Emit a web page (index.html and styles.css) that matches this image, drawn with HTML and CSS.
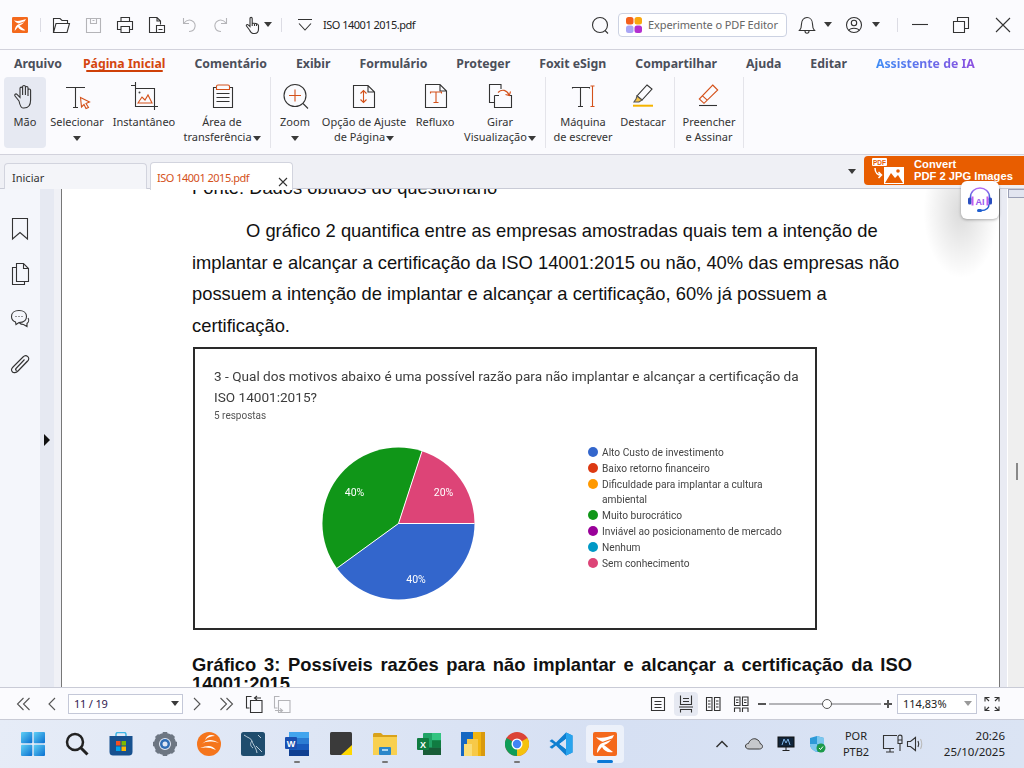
FILE: index.html
```html
<!DOCTYPE html>
<html lang="pt-BR">
<head>
<meta charset="utf-8">
<title>ISO 14001 2015.pdf</title>
<link rel="stylesheet" href="styles.css">
</head>
<body>
<svg class="defs" width="0" height="0" aria-hidden="true">
  <defs>
    <linearGradient id="winGrad" x1="0" y1="0" x2="1" y2="1"><stop offset="0" stop-color="#5fd0f5"/><stop offset="1" stop-color="#0a6fd0"/></linearGradient>
    <linearGradient id="aiGrad" x1="0" y1="0" x2="0" y2="1"><stop offset="0" stop-color="#b46cf5"/><stop offset="1" stop-color="#1f5fd0"/></linearGradient>
    <symbol id="foxit" viewBox="0 0 24 24">
      <rect width="24" height="24" rx="2" fill="#f4691c"/>
      <path d="M3 5 C9 7 14 5 21 3 C19 8 15 12 11 13 L20 20 C15 21 11 19 9 15 C7 17 6 19 4 21 C4 15 7 12 10 10 C8 9 5 8 3 5 Z" fill="#fff"/>
      <path d="M8 11 L19 7" stroke="#f4691c" stroke-width="1.2" fill="none"/>
    </symbol>
  </defs>
</svg>

<header class="titlebar">
  <div class="tb tb-logo"><svg width="16" height="16"><use href="#foxit"/></svg></div>
  <span class="vsep vsep-a"></span>
  <button class="tb"><svg width="20" height="20" class="ic"><path d="M2.5 17.5 V3.5 H9 l2 2 H16.5 V8.5 M2.5 17.5 L5 8.5 H18.5 L16 17.5 Z"/></svg></button>
  <button class="tb"><svg width="20" height="20" class="ic ic-off"><path d="M3.5 3.5 H17.5 V17.5 H3.5 Z M7.5 3.5 V8.5 H13.5 V3.5 M9.5 5.5 H11.5"/></svg></button>
  <button class="tb"><svg width="20" height="20" class="ic"><path d="M6 6.5 V2.5 H14.5 V6.5 M6 14.5 H2.5 V6.5 H17.5 V14.5 H14 M6 11.5 H14.5 V17.5 H6 Z"/></svg></button>
  <button class="tb"><svg width="20" height="20" class="ic"><path d="M9 17.5 H2.5 V2.5 H10 L13.5 6 V9.5 M10 2.5 V6 H13.5 M9.5 10.5 H17.5 V17.5 H9.5 Z M11.5 14.5 H15.5"/></svg></button>
  <button class="tb"><svg width="20" height="20" class="ic ic-off"><path d="M4.5 3 V8.5 H10 M4.5 8.5 C7 5.5 10 4.5 12.5 5.5 C16 7 17 10.5 15.5 13.5 C14.5 15.5 12.5 16.5 10 16.5"/></svg></button>
  <button class="tb"><svg width="20" height="20" class="ic ic-off"><path d="M15.5 3 V8.5 H10 M15.5 8.5 C13 5.5 10 4.5 7.5 5.5 C4 7 3 10.5 4.5 13.5 C5.5 15.5 7.5 16.5 10 16.5"/></svg></button>
  <button class="tb"><svg width="20" height="20" class="ic"><path d="M6.5 15 L3.5 11 C3 10 4.3 9 5.2 9.9 L7 11.5 V3.5 C7 2 9.2 2 9.2 3.5 V8.5 C11 8 15.5 8.5 15.5 10.5 V14 C15.5 17 14 18.5 11.5 18.5 H10 C8.5 18.5 7.5 17 6.5 15 Z M9.2 8.5 V11 M11.5 8.5 V11 M13.5 9 V11"/></svg></button>
  <span class="caret caret-hand"></span>
  <span class="vsep vsep-b"></span>
  <button class="tb tb-drop"><svg width="20" height="20" class="ic"><path d="M3 4.5 H17 M4 8.5 L10 15 L16 8.5"/></svg></button>
  <span class="doc-title">ISO 14001 2015.pdf</span>
  <span class="grow"></span>
  <button class="tb tb-search"><svg width="20" height="20" class="ic"><circle cx="10" cy="10" r="7.5"/><path d="M15 15.5 L18 18.5"/></svg></button>
  <button class="try">
    <svg width="16" height="16"><rect x="0" y="0" width="7.5" height="7.5" rx="2.5" fill="#f4601c"/><rect x="8.5" y="0" width="7.5" height="7.5" rx="2.5" fill="#f9a70f"/><rect x="0" y="8.5" width="7.5" height="7.5" rx="2.5" fill="#a9a6f5"/><rect x="8.5" y="8.5" width="7.5" height="7.5" rx="2.5" fill="#b42fd0"/></svg>
    <span>Experimente o PDF Editor</span>
  </button>
  <button class="tb tb-bell"><svg width="20" height="20" class="ic"><path d="M2.5 15.5 C4.5 13.5 4.5 11.5 4.5 9 C4.5 5 7 2.5 10 2.5 C13 2.5 15.5 5 15.5 9 C15.5 11.5 15.5 13.5 17.5 15.5 Z M8 16 C8 19 12 19 12 16"/></svg></button>
  <span class="caret caret-bell"></span>
  <button class="tb tb-user"><svg width="20" height="20" class="ic"><circle cx="10" cy="10" r="7.5"/><circle cx="10" cy="8" r="2.7"/><path d="M5 15.5 C6 12.5 14 12.5 15 15.5"/></svg></button>
  <span class="caret caret-user"></span>
  <span class="vsep vsep-c"></span>
  <button class="win win-min"><svg width="20" height="20" class="ic"><path d="M2 9.5 H18"/></svg></button>
  <button class="win win-max"><svg width="20" height="20" class="ic"><path d="M2.5 6.5 H13.5 V17.5 H2.5 Z M6.5 6.5 V2.5 H17.5 V13.5 H13.5"/></svg></button>
  <button class="win win-close"><svg width="20" height="20" class="ic"><path d="M3 3 L17 17 M17 3 L3 17"/></svg></button>
</header>

<nav class="menu">
  <span>Arquivo</span>
  <span class="menu-on">Página Inicial</span>
  <span>Comentário</span>
  <span>Exibir</span>
  <span>Formulário</span>
  <span>Proteger</span>
  <span>Foxit eSign</span>
  <span>Compartilhar</span>
  <span>Ajuda</span>
  <span>Editar</span>
  <span class="menu-ai">Assistente de IA</span>
</nav>

<section class="ribbon">
  <div class="rb rb-mao on">
    <svg width="32" height="32" class="ic ic-rb"><path d="M10 19 L6 14 C5 12.7 6.8 11.2 8 12.4 L11 15.5 V6.5 C11 4.7 13.6 4.7 13.6 6.5 V13 V4.8 C13.6 3 16.4 3 16.4 4.8 V13 V5.8 C16.4 4 19 4 19 5.8 V14 V8.3 C19 6.5 21.6 6.5 21.6 8.3 V18 C21.6 23 19 26 15 26 H14 C12.5 26 11.3 25 10 19 Z"/></svg>
    <span>Mão</span>
  </div>
  <div class="rb rb-sel">
    <svg width="32" height="32" class="ic ic-rb"><path d="M5 5.5 H24 M14.5 5.5 V25.5 M12 25.5 H17"/><path class="or" d="M19.5 15.5 L28.5 20 L25 21.5 L27.5 25.5 L25 26.5 L23 22.5 L20.5 25 Z"/></svg>
    <span>Selecionar<br><i class="caret"></i></span>
  </div>
  <div class="rb rb-ins">
    <svg width="32" height="32" class="ic ic-rb"><path d="M3 3.5 L7.5 3.5 M7.5 0 V24.5 H30 M7.5 6.5 H26.5 V28"/><circle cx="11.5" cy="10.5" r="1" class="dot"/><path class="or" d="M10 21 L14 15 L17 18 L20 13 L24 21 Z"/></svg>
    <span>Instantâneo</span>
  </div>
  <div class="rb rb-are">
    <svg width="32" height="32" class="ic ic-rb"><path d="M10 5.5 H7.5 V25.5 H26.5 V5.5 H24 M10.5 11.5 H23.5 M10.5 15.5 H23.5 M10.5 19.5 H23.5"/><path class="or" d="M10.5 7.5 V4.5 C10.5 3.5 11 3 12 3 H22 C23 3 23.5 3.5 23.5 4.5 V7.5 Z"/></svg>
    <span>Área de<br>transferência<i class="caret"></i></span>
  </div>
  <span class="rsep rsep-1"></span>
  <div class="rb rb-zoo">
    <svg width="32" height="32" class="ic ic-rb"><circle cx="16" cy="13.5" r="11"/><path d="M24 21.5 L29 26.5"/><path class="or" d="M10 13.5 H22 M16 7.5 V19.5"/></svg>
    <span>Zoom<br><i class="caret"></i></span>
  </div>
  <div class="rb rb-opc">
    <svg width="32" height="32" class="ic ic-rb"><path d="M5.5 3.5 H20 L26.5 10 V25.5 H5.5 Z M20 3.5 V10 H26.5"/><path class="or" d="M15.5 8.5 V20.5 M12.5 11.5 L15.5 8.5 L18.5 11.5 M12.5 17.5 L15.5 20.5 L18.5 17.5"/></svg>
    <span>Opção de Ajuste<br>de Página<i class="caret"></i></span>
  </div>
  <div class="rb rb-ref">
    <svg width="32" height="32" class="ic ic-rb"><path d="M6.5 2.5 H21 L27.5 9 V25.5 H6.5 Z M21 2.5 V9 H27.5"/><path class="or" d="M11.5 11.5 V10 H22.5 V11.5 M17 10 V20.5 M14.5 20.5 H19.5"/></svg>
    <span>Refluxo</span>
  </div>
  <div class="rb rb-gir">
    <svg width="32" height="32" class="ic ic-rb"><path d="M10 20.5 H5.5 V2.5 H16 M16 2.5 H17 V7"/><path d="M10.5 13.5 V25.5 H27.5 V13.5 H25 M10.5 13.5 H15"/><path class="or" d="M14 10.5 C18 6.5 23 8 25 13 M21.5 12.5 L25.3 13.5 L26.5 9.5"/></svg>
    <span>Girar<br>Visualização<i class="caret"></i></span>
  </div>
  <span class="rsep rsep-2"></span>
  <div class="rb rb-maq">
    <svg width="32" height="32" class="ic ic-rb"><path d="M5.5 6.5 V5.5 H22.5 V6.5 M13.5 5.5 V24.5 M11 24.5 H16"/><path class="or" d="M25.5 4 V24.5 M23.5 4 H27.5 M23.5 24.5 H27.5"/></svg>
    <span>Máquina<br>de escrever</span>
  </div>
  <div class="rb rb-des">
    <svg width="32" height="32" class="ic ic-rb"><path d="M20 3 L25 7 L15 18 L10 14 Z"/><path class="yl" d="M10 14 L15 18 L12 20 L7 20 L9 17 Z"/><path class="yl-line" d="M6 23.7 H26"/></svg>
    <span>Destacar</span>
  </div>
  <span class="rsep rsep-3"></span>
  <div class="rb rb-pre">
    <svg width="32" height="32" class="ic ic-rb"><path d="M6 23.5 H24"/><path class="or" d="M19.7 3 L24.700 8 L11 21.300 L6.300 17 Z M9.500 13.800 L14.500 18.300"/></svg>
    <span>Preencher<br>e Assinar</span>
  </div>
  <span class="rsep rsep-4"></span>
</section>

<section class="tabs">
  <div class="tab">Iniciar</div>
  <div class="tab tab-on"><span class="tab-name">ISO 14001 2015.pdf</span><svg width="12" height="12" class="ic tab-x"><path d="M2 2 L10 10 M10 2 L2 10"/></svg></div>
  <span class="grow"></span>
  <span class="caret caret-tabs"></span>
  <div class="promo">
    <svg width="34" height="26" viewBox="0 0 34 26">
      <rect x="1" y="0" width="15" height="8" rx="1" fill="#fff"/>
      <text x="8.5" y="6.5" class="promo-pdf" text-anchor="middle">PDF</text>
      <path d="M4 10 C4 15 7 17 10 17 M7.5 14 L10.5 17 L7.5 20" stroke="#fff" stroke-width="1.5" fill="none"/>
      <path d="M13 9 H33 V26 H13 Z" fill="#fff"/>
      <path d="M14 25 L20 15 L24 20 L27 17 L32 25 Z" fill="#e85d00"/>
      <circle cx="27" cy="13" r="1.8" fill="#e85d00"/>
    </svg>
    <div class="promo-text"><span>Convert</span><span>PDF 2 JPG Images</span></div>
  </div>
</section>

<div class="ai-btn">
  <svg width="28" height="28" viewBox="0 0 28 28">
    <path d="M4.5 14 V11 C4.5 5.5 9 2 14 2 C19 2 23.5 5.5 23.5 11 V14" stroke="url(#aiGrad)" stroke-width="1.5" fill="none"/>
    <path d="M23 18 C23 22 20 24.5 15 24.5" stroke="#1f5fd0" stroke-width="1.5" fill="none"/>
    <rect x="11" y="23" width="5" height="3" rx="1.5" fill="#1f5fd0"/>
    <rect x="2" y="11.5" width="3.5" height="7" rx="1.6" fill="#2a4fc0"/>
    <rect x="22.5" y="11.5" width="3.5" height="7" rx="1.6" fill="#2a4fc0"/>
    <rect x="5.5" y="10.5" width="2" height="9" fill="#c05df0"/>
    <rect x="20.5" y="10.5" width="2" height="9" fill="#c05df0"/>
    <text x="14" y="18.5" class="ai-t" text-anchor="middle">AI</text>
  </svg>
</div>

<main class="main">
  <aside class="side">
    <div class="side-ic"><svg width="20" height="24" class="ic"><path d="M2.5 1.5 H17.5 V22 L10 15.5 L2.5 22 Z"/></svg></div>
    <div class="side-ic"><svg width="20" height="24" class="ic"><path d="M6.5 1.5 H13.5 L18.5 6.5 V19.5 H6.5 Z M13.5 1.5 V6.5 H18.5 M6.5 5.5 H2.5 V22.5 H14.5 V19.5"/></svg></div>
    <div class="side-ic"><svg width="20" height="24" class="ic"><path d="M9 3.5 C4.5 3.5 1.5 6 1.5 9.5 C1.5 12 3 14 5.5 15 L6 17.5 L9 15.5 C14 15.5 16.5 13 16.5 9.5 C16.5 6 13.5 3.5 9 3.5 Z M18 11 C19 12.5 19 15 17 16.5 L17 19.5 L13.5 17.5 C12 17.5 10.5 17 9.5 16"/><path d="M5.5 9.5 H6.5 M8.5 9.5 H9.5 M11.5 9.5 H12.5"/></svg></div>
    <div class="side-ic side-clip"><svg width="20" height="24" class="ic"><path d="M17.5 8 L8 18 C6 20 3.5 20 2.5 19 C1 17.5 1.5 15.5 3 14 L13 4 C14.5 2.5 16.5 2.5 17.8 3.7 C19 5 18.8 7 17.5 8.3 L8 18 M14.5 6.5 L6 15.5 C5 16.5 6 17.8 7 17"/></svg></div>
  </aside>
  <div class="strip"><span class="strip-arrow"></span></div>
  <div class="gutter"></div>
  <article class="page">
    <div class="page-shade"></div>
    <div class="page-in">
      <p class="source">Fonte: Dados obtidos do questionário</p>
      <p class="para">O gráfico 2 quantifica entre as empresas amostradas quais tem a intenção de implantar e alcançar a certificação da ISO 14001:2015 ou não, 40% das empresas não possuem a intenção de implantar e alcançar a certificação, 60% já possuem a certificação.</p>
      <figure class="chart">
        <div class="chart-in">
          <h2 class="chart-title">3 - Qual dos motivos abaixo é uma possível razão para não implantar e alcançar a certificação da ISO 14001:2015?</h2>
          <div class="chart-sub">5 respostas</div>
          <div class="chart-row">
            <svg class="pie" width="157" height="157" viewBox="0 0 157 157">
              <path d="M78.5 78.5 L154.5 78.5 A76 76 0 0 1 17 123.2 Z" fill="#3366cc"/>
              <path d="M78.5 78.5 L17 123.2 A76 76 0 0 1 102 6.2 Z" fill="#109618"/>
              <path d="M78.5 78.5 L102 6.2 A76 76 0 0 1 154.5 78.5 Z" fill="#dd4477"/>
              <path d="M78.5 78.5 L154.5 78.5 M78.5 78.5 L17 123.2 M78.5 78.5 L102 6.2" stroke="#fff" stroke-width="1" fill="none"/>
              <text x="34.5" y="51" class="pie-t" text-anchor="middle">40%</text>
              <text x="123.5" y="51" class="pie-t" text-anchor="middle">20%</text>
              <text x="96" y="137.500" class="pie-t" text-anchor="middle">40%</text>
            </svg>
            <ul class="legend">
              <li><i class="dot-l c1"></i>Alto Custo de investimento</li>
              <li><i class="dot-l c2"></i>Baixo retorno financeiro</li>
              <li><i class="dot-l c3"></i>Dificuldade para implantar a cultura ambiental</li>
              <li><i class="dot-l c4"></i>Muito burocrático</li>
              <li><i class="dot-l c5"></i>Inviável ao posicionamento de mercado</li>
              <li><i class="dot-l c6"></i>Nenhum</li>
              <li><i class="dot-l c7"></i>Sem conhecimento</li>
            </ul>
          </div>
        </div>
      </figure>
      <p class="caption">Gráfico 3: Possíveis razões para não implantar e alcançar a certificação da ISO 14001:2015.</p>
    </div>
  </article>
  <div class="gutter-r"></div>
  <div class="scroll">
    <span class="scroll-top"></span>
    <span class="scroll-thumb"></span>
  </div>
</main>

<footer class="navbar">
  <button class="nb"><svg width="18" height="18" class="ic ic-nav"><path d="M8.5 3 L2.500 9 L8.500 15 M14.500 3 L8.500 9 L14.500 15"/></svg></button>
  <button class="nb"><svg width="18" height="18" class="ic ic-nav"><path d="M12 3 L6 9 L12 15"/></svg></button>
  <div class="page-box"><span>11 / 19</span><i class="caret"></i></div>
  <button class="nb"><svg width="18" height="18" class="ic ic-nav"><path d="M6 3 L12 9 L6 15"/></svg></button>
  <button class="nb nb-w"><svg width="18" height="18" class="ic ic-nav"><path d="M3.500 3 L9.500 9 L3.500 15 M9.500 3 L15.500 9 L9.500 15"/></svg></button>
  <button class="nb nb-back"><svg width="18" height="18" class="ic"><path d="M6.500 1.500 H1.500 V13 H4.500 M5.500 5.500 H17 V17.500 H5.500 Z M9 3 H16 M12 1 L9.500 3 L12 5"/></svg></button>
  <button class="nb"><svg width="18" height="18" class="ic ic-off"><path d="M6.500 1.500 H1.500 V13 H4.500 M5.500 5.500 H17 V17.500 H5.500 Z M2 15.500 H9 M7 13.500 L9.500 15.500 L7 17.500"/></svg></button>
  <span class="grow"></span>
  <button class="nb"><svg width="18" height="18" class="ic"><path d="M2.500 2.500 H15.500 V15.500 H2.500 Z M5.500 6.500 H12.500 M5.500 9.500 H12.500 M5.500 12.500 H12.500"/></svg></button>
  <button class="nb nb-on"><svg width="18" height="18" class="ic"><path d="M3.500 0.500 V9.500 H14.500 V0.500 M6 3.500 H12 M6 6.500 H12 M2 12 H16 M3.500 17.500 V14.500 H14.500 V17.500"/></svg></button>
  <button class="nb nb-two"><svg width="18" height="18" class="ic"><path d="M2.500 2.500 H8 V15.500 H2.500 Z M10.500 2.500 H16 V15.500 H10.500 Z M4 6 H6.500 M4 9 H6.500 M4 12 H6.500 M12 6 H14.500 M12 9 H14.500 M12 12 H14.500"/></svg></button>
  <button class="nb"><svg width="18" height="18" class="ic"><path d="M2.500 2 H8 V10.500 H2.500 Z M10.500 2 H16 V10.500 H10.500 Z M4 5 H6.500 M4 7.500 H6.500 M12 5 H14.500 M12 7.500 H14.500 M2.500 17 V13 H8 V17 M10.500 17 V13 H16 V17"/></svg></button>
  <span class="zm zm-minus"></span>
  <div class="slider"><span class="thumb"></span></div>
  <span class="zm zm-plus"></span>
  <div class="zoom-box"><span>114,83%</span><i class="caret caret-g"></i></div>
  <button class="nb nb-full"><svg width="18" height="18" class="ic"><path d="M2 6.500 V2.500 H6.500 M2.500 2.500 L6 6 M16 6.500 V2.500 H11.500 M15.500 2.500 L12 6 M2 11.500 V15.500 H6.500 M2.500 15.500 L6 12 M16 11.500 V15.500 H11.500 M15.500 15.500 L12 12"/></svg></button>
</footer>

<footer class="taskbar">
  <div class="tk">
    <svg width="24" height="24"><rect width="11.300" height="11.300" rx="1" fill="url(#winGrad)"/><rect x="12.700" width="11.300" height="11.300" rx="1" fill="url(#winGrad)"/><rect y="12.700" width="11.300" height="11.300" rx="1" fill="url(#winGrad)"/><rect x="12.700" y="12.700" width="11.300" height="11.300" rx="1" fill="url(#winGrad)"/></svg>
  </div>
  <div class="tk">
    <svg width="24" height="24"><circle cx="10" cy="10" r="8" fill="none" stroke="#222" stroke-width="2.500"/><path d="M16 16 L22.500 22.500" stroke="#222" stroke-width="3"/></svg>
  </div>
  <div class="tk">
    <svg width="24" height="24"><path d="M7 5 V2.500 C7 1 8 0.500 9 0.500 H15 C16 0.500 17 1 17 2.500 V5" fill="none" stroke="#3db5e5" stroke-width="1.500"/><path d="M0.500 4 H23.500 V20 C23.500 22.500 22 23.500 20 23.500 H4 C2 23.500 0.500 22.500 0.500 20 Z" fill="#17518f"/><rect x="7" y="9" width="4.500" height="4.500" fill="#f25022"/><rect x="12.500" y="9" width="4.500" height="4.500" fill="#7fba00"/><rect x="7" y="14.500" width="4.500" height="4.500" fill="#00a4ef"/><rect x="12.500" y="14.500" width="4.500" height="4.500" fill="#ffb900"/></svg>
  </div>
  <div class="tk">
    <svg width="24" height="24"><circle cx="12" cy="12" r="8.500" fill="none" stroke="#6d7682" stroke-width="5"/><path d="M12 0 V4 M12 20 V24 M0 12 H4 M20 12 H24 M3.500 3.500 L6.300 6.300 M17.700 17.700 L20.500 20.500 M20.500 3.500 L17.700 6.300 M6.300 17.700 L3.500 20.500" stroke="#6d7682" stroke-width="4.500"/><circle cx="12" cy="12" r="5" fill="#2f6db5"/><circle cx="12" cy="12" r="2.500" fill="#dfe6f4"/></svg>
  </div>
  <div class="tk">
    <svg width="24" height="24"><circle cx="12" cy="12" r="12" fill="#f5751c"/><path d="M3 16 C8 15 13 15 19 18 C15 13 11 13 3 16 Z M5 12 C9 9 14 9 22 11 C15 7 10 7 5 12 Z M8 8 C11 5 14 4 18 4 C14 2 10 3 8 8 Z" fill="#fff"/></svg>
  </div>
  <div class="tk">
    <svg width="24" height="24"><rect width="24" height="24" rx="2.500" fill="#1f4d6e"/><path d="M3 3 C7 6 10 6 11 9 C12 13 15 15 16 21 M11 9 C9 11 9 14 12 16 M17 3 L20 6 M15 14 L21 20" stroke="#b9cbd8" stroke-width="1" fill="none"/></svg>
  </div>
  <div class="tk tk-run">
    <svg width="24" height="24"><rect x="4" y="0" width="20" height="6" fill="#41a5ee"/><rect x="4" y="6" width="20" height="6" fill="#2b7cd3"/><rect x="4" y="12" width="20" height="6" fill="#185abd"/><rect x="4" y="18" width="20" height="6" fill="#103f91"/><rect x="0" y="5" width="12" height="12" rx="1" fill="#1a4fb0"/><text x="6" y="15" class="tk-letter" text-anchor="middle">W</text></svg>
  </div>
  <div class="tk">
    <svg width="24" height="24"><rect x="1" y="0" width="22" height="23" rx="1.500" fill="#3a3a3a"/><path d="M12 23 L23 13 V23 Z" fill="#ffd800"/></svg>
  </div>
  <div class="tk tk-run">
    <svg width="24" height="24"><path d="M0 3 C0 1.500 0.500 1 2 1 H8 L10 3 H24 V6 H0 Z" fill="#d9a21b"/><path d="M0 5 H24 V23 H0 Z" fill="#f8d050"/><rect x="6" y="15" width="12" height="8" rx="1" fill="#2a86c9"/><rect x="9" y="17" width="6" height="2" fill="#a9d5f0"/></svg>
  </div>
  <div class="tk">
    <svg width="24" height="24"><rect x="6" y="1" width="18" height="22" rx="1" fill="#21a366"/><rect x="15" y="1" width="9" height="7.300" fill="#33c481"/><rect x="6" y="8.300" width="9" height="7.300" fill="#21a366"/><rect x="15" y="8.300" width="9" height="7.300" fill="#107c41"/><rect x="6" y="15.600" width="9" height="7.400" fill="#185c37"/><rect x="15" y="15.600" width="9" height="7.400" fill="#185c37"/><rect x="0" y="6" width="12" height="12" rx="1" fill="#107c41"/><text x="6" y="16" class="tk-letter" text-anchor="middle">X</text></svg>
  </div>
  <div class="tk">
    <svg width="24" height="24"><rect width="24" height="24" fill="#1467c2"/><rect x="12" y="0" width="12" height="24" fill="#d99a0e"/><rect x="12" y="0" width="8" height="24" fill="#f2b50f"/><rect x="6" y="7" width="11" height="17" fill="#f7c948"/><rect x="3" y="12" width="8" height="12" fill="#f9dd77"/></svg>
  </div>
  <div class="tk tk-run">
    <svg width="24" height="24"><circle cx="12" cy="12" r="12" fill="#db4437"/><path d="M12 12 L22.400 6 A12 12 0 0 1 12 24 Z" fill="#f4c20d"/><path d="M12 12 L12 24 A12 12 0 0 1 1.600 6 Z" fill="#0f9d58"/><circle cx="12" cy="12" r="5.500" fill="#fff"/><circle cx="12" cy="12" r="4.200" fill="#4285f4"/></svg>
  </div>
  <div class="tk">
    <svg width="24" height="24"><path d="M17 0.500 L23.500 3.500 V20.500 L17 23.500 L7 13.500 L3 16.800 L0.500 15 L5 12 L0.500 9 L3 7.200 L7 10.500 Z M17 7 L10.500 12 L17 17 Z" fill="#0f7fd0" fill-rule="evenodd"/><path d="M17 0.500 L23.500 3.500 V20.500 L17 23.500 Z" fill="#28a4ee"/><path d="M17 7 L10.500 12 L17 17 Z" fill="#d9e2f3"/></svg>
  </div>
  <div class="tk tk-active">
    <svg width="24" height="24"><use href="#foxit"/></svg>
    <span class="tk-bar"></span>
  </div>
  <div class="tray">
    <div class="tr"><svg width="14" height="10" class="ic ic-tr"><path d="M1.500 8 L7 2.500 L12.500 8"/></svg></div>
    <div class="tr"><svg width="18" height="14"><path d="M4 12 C1.500 12 0.500 10.500 0.500 9 C0.500 7.500 2 6.500 3.500 6.500 C4.500 3 8 1 11 2 C14 3 15 5.500 15 6.500 C16.500 7 17.500 8 17.500 9.500 C17.500 11 16 12 14.500 12 Z" fill="#c6c8cc" stroke="#3a3a3a"/></svg></div>
    <div class="tr"><svg width="18" height="16"><rect x="1" y="1" width="16" height="10" fill="#10243a" stroke="#111"/><path d="M5 9 L7 3 L9 7 L11 3 L13 9" stroke="#7db3e6" fill="none"/><path d="M9 11 V14 M5.500 14.500 H12.500" stroke="#222"/></svg></div>
    <div class="tr"><svg width="18" height="18"><path d="M8 1 L15 3 V9 C15 13 12 15.500 8 17 C4 15.500 1 13 1 9 V3 Z" fill="#2d9ad8"/><path d="M8 1 L15 3 V9 L8 9 Z M8 9 V17 C4 15.500 1 13 1 9 Z" fill="#7cc7ee"/><circle cx="12" cy="13" r="4.500" fill="#1c9a49"/><path d="M10 13 L11.500 14.500 L14 11.500" stroke="#fff" fill="none"/></svg></div>
    <div class="lang"><span>POR</span><span>PTB2</span></div>
    <div class="tr tr-net"><svg width="24" height="20" class="ic"><path d="M12 14.500 H1.500 V1.500 H15 M8 14.500 V17.500 M4 18 H12 M16 3 C16 0.500 20 0.500 20 3 V9.500 H16 Z M18 9.500 V17 M16 6 H20"/></svg></div>
    <div class="tr tr-spk"><svg width="20" height="18" class="ic"><path d="M1.500 6.500 H4.500 L9.500 2.500 V15.500 L4.500 11.500 H1.500 Z M12 6 C13 8 13 10 12 12"/><path class="off" d="M14.500 4 C16 7 16 11 14.500 14"/></svg></div>
    <div class="clock"><span>20:26</span><span>25/10/2025</span></div>
  </div>
</footer>
</body>
</html>
```
FILE: styles.css
```css
* { box-sizing: border-box; }
html, body { margin: 0; padding: 0; }
body {
  width: 1024px; height: 768px; overflow: hidden; position: relative;
  display: flex; flex-direction: column;
  font-family: "Noto Sans", "Open Sans", sans-serif; background: #fbfbfe; color: #333;
}
.defs { position: absolute; }
button { border: 0; background: none; padding: 0; margin: 0; font: inherit; display: flex; align-items: center; justify-content: center; }
i { font-style: normal; }
.grow { flex: 1 1 auto; }

.ic { fill: none; stroke: #333; stroke-width: 1.1; }
.ic-off { stroke: #b4b4b8; }
.ic .or { stroke: #d4511a; }
.ic .dot { fill: #444; stroke: none; }
.ic .yl { fill: #f5c44a; stroke: #555; }
.ic .yl-line { stroke: #f5b400; stroke-width: 2; }
.ic .off { stroke: #bbb; }

.caret { display: inline-block; width: 0; height: 0; border-left: 4px solid transparent; border-right: 4px solid transparent; border-top: 5px solid #3a3a3a; vertical-align: middle; }
.caret-g { border-top-color: #999; }

/* title bar */
.titlebar { height: 50px; flex: none; display: flex; align-items: center; padding-left: 4px; border-bottom: 1px solid #d2d2dc; }
.tb { width: 32px; height: 32px; flex: none; display: flex; align-items: center; justify-content: center; }
.vsep { width: 1px; height: 14px; background: #dcdce4; flex: none; }
.vsep-a { margin: 0 4px; }
.caret-hand { margin-left: -5px; flex: none; }
.vsep-b { margin-left: 9px; }
.tb-drop { margin-left: 7px; }
.doc-title { margin-left: 2px; font-size: 11px; letter-spacing: -.5px; color: #222; white-space: nowrap; }
.tb-search { width: 24px; margin-right: 6px; }
.try { width: 169px; height: 24px; flex: none; background: #fff; border: 1px solid #ccd2e2; border-radius: 4px; justify-content: flex-start; padding-left: 7px; gap: 6px; font-size: 11px; letter-spacing: -.1px; color: #666; white-space: nowrap; }
.tb-bell { width: 24px; margin-left: 8px; }
.caret-bell { margin-left: 5px; flex: none; }
.tb-user { width: 24px; margin-left: 10px; }
.caret-user { margin-left: 6px; flex: none; }
.vsep-c { margin-left: 17px; }
.win { height: 32px; flex: none; }
.win-min { width: 40px; margin-left: 2px; }
.win-max { width: 40px; margin-left: 1px; }
.win-close { width: 42px; margin-left: 1px; }

/* menu */
.menu { height: 26px; flex: none; display: flex; align-items: center; gap: 29px; padding-left: 14px; font-size: 12.300px; font-weight: 700; color: #4b4f5a; white-space: nowrap; }
.menu-on { color: #d4460f; position: relative; margin-left: -8px; }
.menu-on::after { content: ""; position: absolute; left: 3px; right: 2px; bottom: 0; height: 2px; border-radius: 1px; background: #cf4008; }
.menu-ai { background: linear-gradient(90deg, #3f8cf5, #8b4fe0); -webkit-background-clip: text; background-clip: text; color: transparent; }

/* ribbon */
.ribbon { height: 79px; flex: none; display: flex; align-items: stretch; padding: 1px 0 6px 4px; border-bottom: 1px solid #d2d2dc; }
.rb { flex: none; display: flex; flex-direction: column; align-items: center; padding-top: 5px; font-size: 11px; line-height: 15px; color: #333; text-align: center; white-space: nowrap; }
.rb .caret { margin-left: 1px; }
.rb.on { background: #e6e9f2; border-radius: 4px; }
.rb-mao { width: 42px; }
.rb-sel { width: 62px; }
.rb-ins { width: 72px; }
.rb-are { width: 84px; }
.rb-zoo { width: 48px; }
.rb-opc { width: 90px; }
.rb-ref { width: 52px; }
.rb-gir { width: 78px; }
.rb-maq { width: 74px; }
.rb-des { width: 46px; }
.rb-pre { width: 68px; }
.ic-rb { flex: none; }
.rsep { width: 1px; background: #e4e4ea; flex: none; }
.rsep-1 { margin-left: 6px; }
.rsep-2 { margin-left: 6px; }
.rsep-3 { margin-left: 8px; }

/* tabs */
.tabs { height: 34px; flex: none; display: flex; align-items: flex-end; padding-left: 4px; background: #eff0f5; border-bottom: 1px solid #c9cbd6; position: relative; }
.tab { width: 143px; height: 26px; flex: none; background: #f4f5f9; border: 1px solid #d2d4de; border-bottom: 0; border-radius: 4px 4px 0 0; padding: 6px 0 0 7px; font-size: 11px; line-height: 15px; color: #333; margin-bottom: -1px; }
.tab-on { height: 28px; margin-left: 3px; background: #fff; color: #d4511a; padding: 7px 0 0 6px; display: flex; align-items: flex-start; justify-content: space-between; position: relative; z-index: 1; margin-bottom: -2px; }
.tab-name { letter-spacing: -.5px; white-space: nowrap; }
.tab-x { flex: none; align-self: center; margin: 4px 3px 0 0; }
.caret-tabs { align-self: center; margin: 0 8px 0 0; }
.promo { width: 160px; height: 29px; flex: none; align-self: flex-start; margin-top: 1px; background: #e85d00; border-radius: 4px 0 0 4px; display: flex; align-items: center; padding-left: 7px; gap: 9px; color: #fff; }
.promo-pdf { font: 700 6.500px "Liberation Sans", sans-serif; fill: #e85d00; }
.promo-text { display: flex; flex-direction: column; padding-bottom: 2px; font: 700 11.200px/12px "Liberation Sans", sans-serif; white-space: nowrap; }
.ai-btn { position: absolute; left: 961px; top: 181px; width: 38px; height: 38px; background: #fff; border-radius: 6px; box-shadow: 0 1px 3px rgba(0,0,0,.3); display: flex; align-items: center; justify-content: center; z-index: 5; }
.ai-t { font: 700 9px "Liberation Sans", sans-serif; fill: #9a55ee; }

/* main */
.main { height: 499px; flex: none; display: flex; overflow: hidden; border-bottom: 1px solid #c9cbd6; background: #f0f1f6; }
.side { width: 40px; flex: none; background: #f4f6fb; padding-top: 17px; }
.side-ic { height: 45px; display: flex; align-items: center; justify-content: center; }
.side-clip { padding-top: 3px; }
.strip { width: 14px; flex: none; background: #e6e9f2; display: flex; align-items: center; padding: 3px 0 0 4px; }
.strip-arrow { width: 0; height: 0; border-top: 6px solid transparent; border-bottom: 6px solid transparent; border-left: 6px solid #111; }
.gutter { width: 7px; flex: none; background: #f0f1f6; }
.page { width: 939px; flex: none; background: #fff; border-left: 1px solid #777; border-right: 1px solid #777; overflow: hidden; position: relative; }
.page-shade { position: absolute; right: 0; top: 0; width: 76px; height: 90px; background: radial-gradient(ellipse at 50% 25%, rgba(0,0,0,.14), rgba(0,0,0,0) 70%); }
.page-in { position: relative; width: 720px; margin: -15px 0 0 130px; font-family: "Liberation Sans", Arial, sans-serif; color: #111; }
.source { margin: 0; font-size: 18.370px; line-height: 28px; white-space: nowrap; }
.para { margin: 13px 0 0; font-size: 18.370px; line-height: 31.700px; text-indent: 54px; }
.chart { width: 624px; height: 283px; margin: 5px 0 0 1px; border: 2px solid #2a2a2a; background: #fff; }
.chart-in { padding: 17px 0 0 19px; height: 100%; filter: blur(.3px); font-family: Roboto, "Liberation Sans", sans-serif; color: #444; }
.chart-title { margin: 0; width: 590px; font-size: 13.600px; line-height: 21px; font-weight: 400; color: #3c3c3c; }
.chart-sub { font-size: 10px; line-height: 14px; color: #555; margin-top: 1px; }
.chart-row { display: flex; align-items: flex-start; padding-left: 106px; }
.pie { margin-top: 22px; flex: none; }
.pie-t { font: 10.500px Roboto, sans-serif; fill: #fff; }
.legend { list-style: none; margin: 22px 0 0 111px; padding: 0; width: 210px; font-size: 10.200px; line-height: 15px; color: #444; }
.legend li { position: relative; padding: 0 0 1px 14px; }
.dot-l { position: absolute; left: 0; top: 2px; width: 10px; height: 10px; border-radius: 50%; }
.c1 { background: #3366cc; } .c2 { background: #dc3912; } .c3 { background: #ff9900; } .c4 { background: #109618; }
.c5 { background: #990099; } .c6 { background: #0099c6; } .c7 { background: #dd4477; }
.caption { margin: 25px 0 0; font-size: 18.370px; line-height: 19px; font-weight: 700; text-align: justify; }
.gutter-r { width: 8px; flex: none; background: #e9ebf3; border-right: 1px solid #fff; }
.scroll { flex: 1 1 auto; background: #efefef; position: relative; display: flex; flex-direction: column; align-items: center; }
.scroll-top { width: 17px; height: 9px; background: #e2e5f0; border: 1px solid #9a9fb5; flex: none; }
.scroll-thumb { width: 2px; height: 17px; margin-top: 265px; background: #888; flex: none; }

/* bottom navigation */
.navbar { height: 32px; flex: none; display: flex; align-items: center; padding: 0 20px 0 10px; border-bottom: 1px solid #c9cbd6; }
.nb { width: 28px; height: 24px; flex: none; }
.nb-w { width: 30px; }
.nb-back { margin-left: -1px; }
.ic-nav { stroke: #555; }
.page-box { width: 115px; height: 20px; margin-left: 2px; flex: none; border: 1px solid #c4c8d8; background: #fff; display: flex; align-items: center; justify-content: space-between; padding: 0 3px 0 5px; font-size: 11px; letter-spacing: -.2px; color: #302050; }
.nb-on { width: 24px; margin-left: 2px; background: #e6e9f2; border-radius: 4px; }
.nb-two { margin-left: 1px; }
.zm { flex: none; position: relative; width: 8px; height: 2px; background: #555; }
.zm-minus { margin-left: 3px; }
.zm-plus { margin-left: 3px; }
.zm-plus::after { content: ""; position: absolute; left: 3px; top: -3px; width: 2px; height: 8px; background: #555; }
.slider { width: 112px; height: 2px; margin-left: 3px; flex: none; background: #b4b4b8; position: relative; }
.thumb { position: absolute; left: 53px; top: -4px; width: 10px; height: 10px; border-radius: 50%; background: #fff; border: 1px solid #555; }
.zoom-box { width: 80px; height: 20px; margin-left: 5px; flex: none; border: 1px solid #c4c8d8; background: #fff; display: flex; align-items: center; justify-content: space-between; padding: 0 4px 0 5px; font-size: 11px; color: #222; }
.nb-full { width: 24px; margin-left: 3px; }

/* task bar */
.taskbar { flex: 1 1 auto; display: flex; align-items: center; padding: 0 19px 0 11px; background: linear-gradient(100deg, #e6ecf7, #d6e0f3 60%, #dbe4f4); position: relative; }
.tk { width: 44px; height: 38px; flex: none; display: flex; align-items: center; justify-content: center; position: relative; }
.tk-run::after { content: ""; position: absolute; left: 19px; bottom: 0; width: 6px; height: 2px; border-radius: 1px; background: #777; }
.tk-letter { font: 700 9px "Liberation Sans", sans-serif; fill: #fff; }
.tk-active { width: 38px; margin-left: 3px; background: rgba(255,255,255,.55); border-radius: 4px; }
.tk-bar { position: absolute; left: 11px; bottom: 0; width: 16px; height: 3px; border-radius: 2px; background: #0a78d6; }
.tray { margin-left: auto; display: flex; align-items: center; color: #222; }
.tr { width: 32px; height: 32px; flex: none; display: flex; align-items: center; justify-content: center; }
.ic-tr { stroke-width: 1.500; }
.lang { width: 44px; flex: none; display: flex; flex-direction: column; align-items: center; font-size: 11px; line-height: 16px; }
.tr-net { width: 24px; margin-left: 4px; }
.tr-spk { width: 20px; }
.clock { width: 79px; flex: none; display: flex; flex-direction: column; align-items: flex-end; font-size: 11.500px; line-height: 16px; }
```
